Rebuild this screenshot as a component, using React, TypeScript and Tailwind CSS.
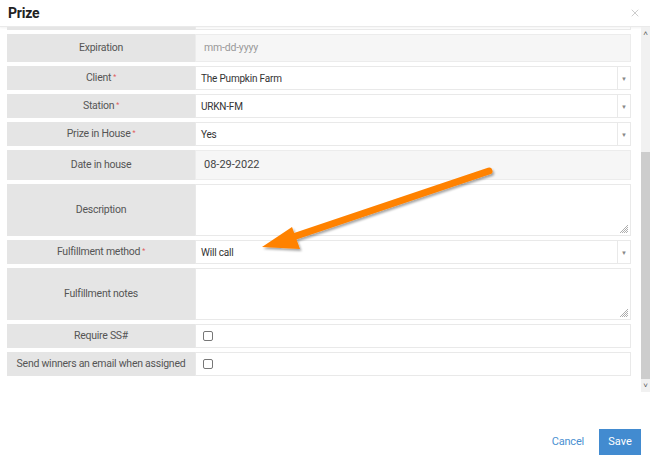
import { X } from 'lucide-react';

type Row = {
  label: string;
  required?: boolean;
  kind: 'select' | 'date' | 'textarea' | 'checkbox';
  value?: string;
  placeholder?: boolean;
};

const rows: Row[] = [
  { label: 'Expiration', kind: 'date', value: 'mm-dd-yyyy', placeholder: true },
  { label: 'Client', required: true, kind: 'select', value: 'The Pumpkin Farm' },
  { label: 'Station', required: true, kind: 'select', value: 'URKN-FM' },
  { label: 'Prize in House', required: true, kind: 'select', value: 'Yes' },
  { label: 'Date in house', kind: 'date', value: '08-29-2022' },
  { label: 'Description', kind: 'textarea' },
  { label: 'Fulfillment method', required: true, kind: 'select', value: 'Will call' },
  { label: 'Fulfillment notes', kind: 'textarea' },
  { label: 'Require SS#', kind: 'checkbox' },
  { label: 'Send winners an email when assigned', kind: 'checkbox' },
];

function ResizeHandle() {
  return (
    <svg className="absolute bottom-[2px] right-[2px] w-[8px] h-[8px]" viewBox="0 0 8 8">
      <path d="M8 0L0 8M8 2L2 8M8 4L4 8M8 6L6 8" stroke="#999" strokeWidth="0.8" />
    </svg>
  );
}

function FieldRow({ row }: { row: Row }) {
  let h = 'h-[24px]';
  if (row.kind === 'textarea') h = 'h-[52px]';
  if (row.kind === 'date') h = row.placeholder ? 'h-[28px]' : 'h-[30px]';
  return (
    <div className={`flex shrink-0 ${h}`}>
      <div className="w-[188px] shrink-0 bg-[#e5e5e5] flex items-center justify-center text-[10.5px] tracking-[-0.25px] text-[#555]">
        {row.label}
        {row.required && <span className="text-[#e05a5a] text-[7px] ml-[2px] -mt-[2px]">*</span>}
      </div>
      {row.kind === 'select' && (
        <div className="flex-1 flex border border-[#e9e9e9] bg-white">
          <div className="flex-1 flex items-center pl-[5px] text-[10px] tracking-[-0.2px] text-[#333]">{row.value}</div>
          <div className="w-[13px] border-l border-[#e9e9e9] flex items-center justify-center">
            <span className="text-[#888] text-[6px]">▼</span>
          </div>
        </div>
      )}
      {row.kind === 'date' && (
        <div
          className={`flex-1 flex items-center pl-[8px] border border-[#ececec] bg-[#f6f6f6] ${
            row.placeholder ? 'text-[10.5px] text-[#999] tracking-[-0.2px]' : 'text-[11px] text-[#444]'
          }`}
        >
          {row.value}
        </div>
      )}
      {row.kind === 'textarea' && (
        <div className="flex-1 relative border border-[#e9e9e9] bg-white">
          <ResizeHandle />
        </div>
      )}
      {row.kind === 'checkbox' && (
        <div className="flex-1 flex items-center pl-[7px] border border-[#e9e9e9] bg-white">
          <div className="w-[10px] h-[10px] border border-[#777] rounded-[2px]" />
        </div>
      )}
    </div>
  );
}

export default function App() {
  return (
    <div className="w-[650px] h-[463px] bg-white relative overflow-hidden font-['Roboto',sans-serif]">
      <div className="h-[27px] flex items-center justify-between pl-[8px] pr-[9px] border-b border-[#eaeaea] shadow-[0_1px_2px_rgba(0,0,0,0.05)]">
        <h1 className="text-[14px] font-bold text-[#222] tracking-[-0.2px]">Prize</h1>
        <X className="w-[12px] h-[12px] text-[#aaa]" strokeWidth={1.2} />
      </div>
      <div className="flex h-[365px]">
        <div className="w-[624px] ml-[7px] flex flex-col gap-[4px] overflow-hidden">
          <div className="flex h-[3px] shrink-0">
            <div className="w-[188px] bg-[#e5e5e5]" />
            <div className="flex-1 border-b border-x border-[#e9e9e9]" />
          </div>
          {rows.map((r) => (
            <FieldRow key={r.label} row={r} />
          ))}
        </div>
        <div className="ml-[10px] w-[9px] bg-[#f1f1f1] flex flex-col items-center">
          <span className="text-[#555] text-[8px] leading-[10px] mt-[2px]">˄</span>
          <div className="flex-1 w-full flex flex-col pt-[113px] pb-[2px]">
            <div className="flex-1 bg-[#cdcdcd]" />
          </div>
          <span className="text-[#555] text-[8px] leading-[10px] mb-[1px]">˅</span>
        </div>
      </div>
      <div className="flex justify-end items-center gap-[15px] pr-[9px] mt-[37px]">
        <span className="text-[11px] text-[#4a8fd1] tracking-[-0.2px]">Cancel</span>
        <button className="w-[42px] h-[26px] bg-[#428bd0] text-white text-[11px]">Save</button>
      </div>
      <svg className="absolute left-0 top-0 pointer-events-none" width="650" height="463">
        <defs>
          <filter id="sh" x="-10%" y="-10%" width="130%" height="140%">
            <feDropShadow dx="1.5" dy="2" stdDeviation="1.2" floodColor="#000" floodOpacity="0.35" />
          </filter>
        </defs>
        <g filter="url(#sh)">
          <line x1="489" y1="171" x2="290" y2="238" stroke="#ff8200" strokeWidth="7" strokeLinecap="round" />
          <polygon points="262,247 292,227 300,249" fill="#ff8200" />
        </g>
      </svg>
    </div>
  );
}
